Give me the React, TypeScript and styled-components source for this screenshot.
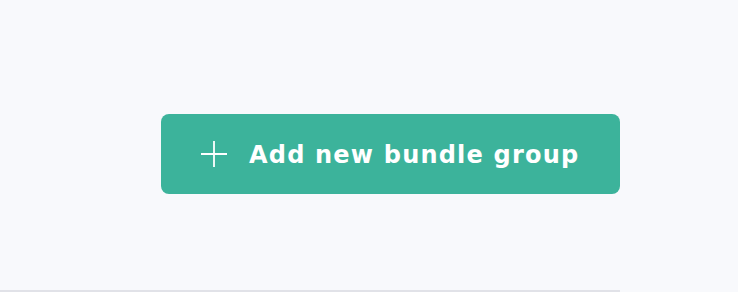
import React from 'react';
import styled, { createGlobalStyle } from 'styled-components';

const GlobalStyle = createGlobalStyle`
  html, body {
    margin: 0;
    padding: 0;
    background: #f8f9fc;
    font-family: "DejaVu Sans", "Noto Sans", sans-serif;
  }
`;

const Page = styled.div`
  width: 738px;
  height: 292px;
  overflow: hidden;
`;

const Section = styled.div`
  width: 620px;
  height: 290px;
  border-bottom: 2px solid #e1e2e8;
  display: flex;
  justify-content: flex-end;
  align-items: flex-start;
`;

const AddButton = styled.button`
  margin-top: 114px;
  width: 459px;
  height: 80px;
  border: none;
  border-radius: 8px;
  background: #3cb39b;
  color: #fff;
  display: flex;
  align-items: center;
  gap: 22px;
  padding: 0 0 0 40px;
  font-family: "DejaVu Sans", "Noto Sans", sans-serif;
  font-weight: 700;
  font-size: 24px;
  letter-spacing: 1.2px;
  cursor: pointer;
`;

const Label = styled.span`
  line-height: 1;
  padding-top: 1px;
`;

const PlusIcon = () => (
  <svg width="26" height="26" viewBox="0 0 26 26" fill="none">
    <path d="M13 0v26M0 13h26" stroke="#fff" strokeWidth="1.8" />
  </svg>
);

export default function App() {
  return (
    <Page>
      <GlobalStyle />
      <Section>
        <AddButton>
          <PlusIcon />
          <Label>Add new bundle group</Label>
        </AddButton>
      </Section>
    </Page>
  );
}
